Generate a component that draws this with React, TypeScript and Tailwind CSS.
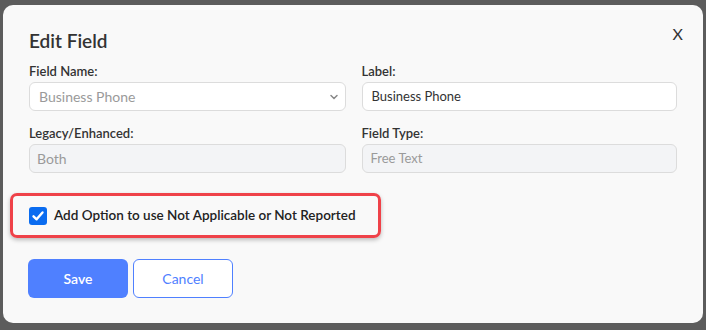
import React from 'react';

const Field: React.FC<{ label: string; children: React.ReactNode }> = ({ label, children }) => (
  <div className="flex flex-col">
    <label className="text-[13px] font-semibold text-[#333] leading-4 mb-[3px]">{label}</label>
    {children}
  </div>
);

const App: React.FC = () => {
  return (
    <div
      className="w-[706px] h-[330px] bg-[#5c5c5c] pt-[5px] pl-[3px]"
      style={{ fontFamily: 'Lato, "Open Sans", sans-serif' }}
    >
      <div className="relative w-[700px] h-[318px] bg-[#f9f9f9] rounded-[10px] pl-[26px] pr-[25px] pt-[24px]">
        {/* close button */}
        <button className="absolute right-[20px] top-[21px] text-[16px] text-[#333] leading-none">X</button>

        <h2 className="text-[19px] font-semibold text-[#333] leading-6 mb-[10px]">Edit Field</h2>

        <div className="grid grid-cols-2 gap-x-[16px] gap-y-[14px]">
          <Field label="Field Name:">
            <div className="h-[29px] bg-white border border-[#dcdcdc] rounded-[6px] flex items-center justify-between pl-[9px] pr-[6px]">
              <span className="text-[14px] text-[#9a9a9a]">Business Phone</span>
              <svg width="10" height="10" viewBox="0 0 10 10" fill="none">
                <path d="M2 3.5 L5 6.5 L8 3.5" stroke="#888" strokeWidth="1.5" strokeLinecap="round" />
              </svg>
            </div>
          </Field>
          <Field label="Label:">
            <div className="h-[29px] bg-white border border-[#dcdcdc] rounded-[6px] flex items-center pl-[9px] mr-[1px]">
              <span className="text-[13px] text-[#333]">Business Phone</span>
            </div>
          </Field>
          <Field label="Legacy/Enhanced:">
            <div className="h-[29px] bg-[#f3f4f6] border border-[#dcdcdc] rounded-[6px] flex items-center pl-[7px]">
              <span className="text-[14px] text-[#9a9a9a]">Both</span>
            </div>
          </Field>
          <Field label="Field Type:">
            <div className="h-[29px] bg-[#f3f4f6] border border-[#dcdcdc] rounded-[6px] flex items-center pl-[8px] mr-[1px]">
              <span className="text-[13px] text-[#9a9a9a]">Free Text</span>
            </div>
          </Field>
        </div>

        <div className="mt-[20px] -ml-[19px] w-[371px] h-[45px] border-[3px] border-[#ef4249] rounded-[7px] shadow-[0_2px_4px_rgba(0,0,0,0.25)] flex items-center pl-[16px]">
          <span className="w-[18px] h-[18px] bg-[#0a6cf0] rounded-[3px] flex items-center justify-center">
            <svg width="14" height="14" viewBox="0 0 14 14" fill="none">
              <path d="M2.5 7.3 L5.6 10.3 L11.5 3.5" stroke="white" strokeWidth="2.4" strokeLinecap="round" strokeLinejoin="round" />
            </svg>
          </span>
          <span className="ml-[7px] text-[13.5px] font-semibold text-[#222]">Add Option to use Not Applicable or Not Reported</span>
        </div>

        <div className="mt-[21px] -ml-[1px] flex gap-[5px]">
          <button className="w-[100px] h-[39px] bg-[#4f80ff] rounded-[6px] text-white text-[14px] font-semibold">Save</button>
          <button className="w-[100px] h-[39px] bg-white border border-[#4f80ff] rounded-[6px] text-[#4f80ff] text-[14px]">Cancel</button>
        </div>
      </div>
    </div>
  );
};

export default App;
